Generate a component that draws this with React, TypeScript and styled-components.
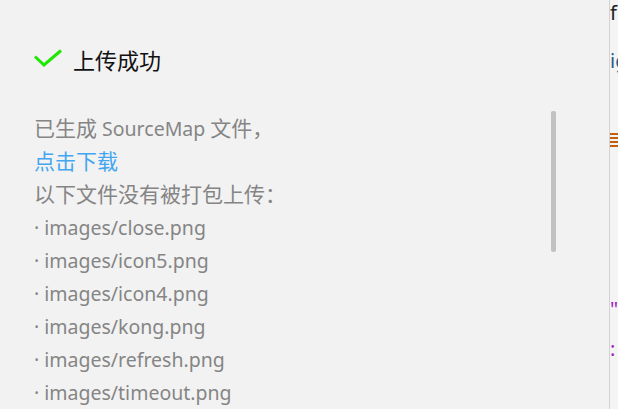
import React from "react";
import styled, { createGlobalStyle } from "styled-components";

const Global = createGlobalStyle`
  html, body { margin: 0; padding: 0; background: #f2f2f2; }
  body { font-family: "Noto Sans CJK SC", sans-serif; }
`;

const Page = styled.div`
  display: flex;
  width: 618px;
  height: 409px;
  overflow: hidden;
`;

const Panel = styled.div`
  width: 610px;
  flex: none;
  background: #f2f2f2;
  border-right: 1px solid #d2d2d2;
  display: flex;
  flex-direction: column;
  padding-left: 34px;
  box-sizing: border-box;
`;

const Header = styled.div`
  display: flex;
  align-items: center;
  gap: 11px;
  height: 40px;
  margin-top: 39px;
`;

const Title = styled.div`
  font-family: "Noto Sans CJK SC", sans-serif;
  font-size: 22px;
  color: #111;
`;

const Body = styled.div`
  position: relative;
  margin-top: 32px;
  width: 522px;
  flex: 1;
`;

const Line = styled.div<{ $link?: boolean }>`
  font-family: "Noto Sans CJK SC", sans-serif;
  font-size: 21px;
  line-height: 33px;
  height: 33px;
  white-space: nowrap;
  color: ${(p) => (p.$link ? "#43a6f1" : "#858585")};
  cursor: ${(p) => (p.$link ? "pointer" : "default")};
`;

const Latin = styled.span`
  font-family: "Noto Sans", sans-serif;
  font-size: 19.5px;
`;

const Thumb = styled.div`
  position: absolute;
  right: 0;
  top: 0;
  width: 5px;
  height: 141px;
  border-radius: 2px;
  background: #c1c1c1;
`;

const Editor = styled.div`
  flex: 1;
  background: #f4f4f4;
  display: flex;
  flex-direction: column;
  overflow: hidden;
  font-family: "Noto Sans", "Noto Sans CJK SC", sans-serif;
  font-size: 20px;
`;

const Code = styled.div<{ $gap: number; $color: string }>`
  margin-top: ${(p) => p.$gap}px;
  height: 24px;
  line-height: 24px;
  color: ${(p) => p.$color};
  white-space: nowrap;
`;

const Underlined = styled.div`
  margin-top: 60px;
  width: 12px;
  height: 14px;
  background: repeating-linear-gradient(
    to bottom,
    #c06010 0px,
    #c06010 1.7px,
    transparent 1.7px,
    transparent 4px
  );
`;

const files = [
  "images/close.png",
  "images/icon5.png",
  "images/icon4.png",
  "images/kong.png",
  "images/refresh.png",
  "images/timeout.png",
];

export default function App() {
  return (
    <Page>
      <Global />
      <Panel>
        <Header>
          <svg width="28" height="20" viewBox="0 0 28 20">
            <path d="M1 7.5 L10 16 L27 1.5" fill="none" stroke="#1ee800" strokeWidth="3" />
          </svg>
          <Title>上传成功</Title>
        </Header>
        <Body>
          <Line>
            已生成<Latin> SourceMap </Latin>文件，
          </Line>
          <Line $link>点击下载</Line>
          <Line>以下文件没有被打包上传：</Line>
          {files.map((f) => (
            <Line key={f}>
              <Latin>· {f}</Latin>
            </Line>
          ))}
          <Thumb />
        </Body>
      </Panel>
      <Editor>
        <Code $gap={1} $color="#222">fi</Code>
        <Code $gap={24} $color="#2b5a8a">ig</Code>
        <Underlined />
        <Code $gap={150} $color="#a020c0">"</Code>
        <Code $gap={16} $color="#a020c0">:</Code>
      </Editor>
    </Page>
  );
}
